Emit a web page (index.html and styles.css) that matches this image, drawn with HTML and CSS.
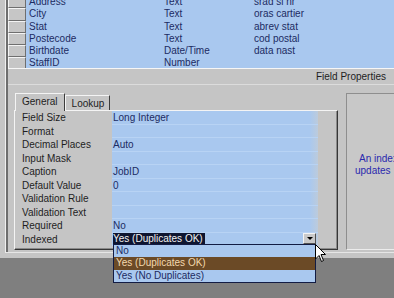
FILE: index.html
```html
<!DOCTYPE html>
<html lang="en">
<head>
    <meta charset="UTF-8">
    <title>Table Design</title>
    <link rel="stylesheet" href="styles.css">
</head>
<body>
    <div class="window">
        <div class="frame">
            <div class="grid">
                <div class="grid-rows">
                    <div class="grow"><span class="sel"></span><span class="c-name">Address</span><span class="c-type">Text</span><span class="c-desc">srad si nr</span></div>
                    <div class="grow"><span class="sel"></span><span class="c-name">City</span><span class="c-type">Text</span><span class="c-desc">oras cartier</span></div>
                    <div class="grow"><span class="sel"></span><span class="c-name">Stat</span><span class="c-type">Text</span><span class="c-desc">abrev stat</span></div>
                    <div class="grow"><span class="sel"></span><span class="c-name">Postecode</span><span class="c-type">Text</span><span class="c-desc">cod postal</span></div>
                    <div class="grow"><span class="sel"></span><span class="c-name">Birthdate</span><span class="c-type">Date/Time</span><span class="c-desc">data nast</span></div>
                    <div class="grow"><span class="sel"></span><span class="c-name">StaffID</span><span class="c-type">Number</span><span class="c-desc"></span></div>
                </div>
            </div>

            <div class="fp-head">Field Properties</div>

            <div class="props">
                <div class="tabs-area">
                    <div class="tabs">
                        <span class="tab active">General</span>
                        <span class="tab">Lookup</span>
                    </div>
                    <div class="panel">
                        <div class="prow"><span class="plabel">Field Size</span><span class="pval">Long Integer</span></div>
                        <div class="prow"><span class="plabel">Format</span><span class="pval"></span></div>
                        <div class="prow"><span class="plabel">Decimal Places</span><span class="pval">Auto</span></div>
                        <div class="prow"><span class="plabel">Input Mask</span><span class="pval"></span></div>
                        <div class="prow"><span class="plabel">Caption</span><span class="pval">JobID</span></div>
                        <div class="prow"><span class="plabel">Default Value</span><span class="pval">0</span></div>
                        <div class="prow"><span class="plabel">Validation Rule</span><span class="pval"></span></div>
                        <div class="prow"><span class="plabel">Validation Text</span><span class="pval"></span></div>
                        <div class="prow"><span class="plabel">Required</span><span class="pval">No</span></div>
                        <div class="prow"><span class="plabel">Indexed</span><span class="pval combo"><span class="combo-sel">Yes (Duplicates OK)</span><span class="combo-btn"></span></span></div>
                    </div>
                </div>
                <div class="help">
                    <p class="help-text">An index speeds up searches<br>updates</p>
                </div>
            </div>
        </div>

        <!-- open dropdown list over the grid -->
        <div class="droplist">
            <div class="ditem">No</div>
            <div class="ditem picked">Yes (Duplicates OK)</div>
            <div class="ditem">Yes (No Duplicates)</div>
        </div>
        <svg class="cursor" width="12" height="19" viewBox="0 0 12 19">
            <path d="M0.5 0.5 L0.5 15 L4 11.5 L6.5 17.5 L8.5 16.5 L6 10.5 L10.5 10.5 Z" fill="#fff" stroke="#000" stroke-width="1"/>
        </svg>
    </div>
</body>
</html>
```

FILE: styles.css
```css
body {
    margin: 0;
    width: 394px;
    height: 298px;
    overflow: hidden;
    background: #7f7f7f;
    font-family: "Liberation Sans", Arial, sans-serif;
    font-size: 10px;
}

.window {
    position: relative;
    height: 258px;
    padding-left: 5px;
    background: #c5c5c5;
    box-sizing: border-box;
}

.frame {
    height: 252px;
    padding-left: 2px;
    border-left: 1px solid #efefef;
    border-bottom: 1px solid #e6e6e6;
    box-shadow: inset 2px 0 #6e6e6e;
}

/* field grid */
.grid {
    height: 68px;
    overflow: hidden;
    border-bottom: 1px solid #f6f6f6;
    background: #a9c8ef;
}

.grid-rows {
    margin-top: -4px;
}

.grow {
    display: flex;
    height: 12.25px;
    line-height: 12.25px;
    color: #1c2b62;
    white-space: nowrap;
}

.sel {
    width: 18px;
    flex: none;
    background: #c6c6c6;
    border-top: 1px solid #f4f4f4;
    border-left: 1px solid #f4f4f4;
    border-right: 1px solid #6f6f6f;
    border-bottom: 1px solid #6f6f6f;
    box-sizing: border-box;
}

.c-name {
    width: 138px;
    padding-left: 3px;
    flex: none;
    box-sizing: border-box;
}

.c-type {
    width: 90px;
    flex: none;
}

.c-desc {
    flex: 1;
}

.fp-head {
    height: 15px;
    line-height: 15px;
    text-align: right;
    padding-right: 8px;
    color: #1e1e1e;
    border-bottom: 1px solid #dcdcdc;
}

/* properties */
.props {
    display: flex;
    align-items: flex-start;
}

.tabs-area {
    margin-left: 6px;
    margin-top: 8px;
    width: 324px;
    flex: none;
}

.tabs {
    display: flex;
    align-items: flex-end;
    padding-left: 1px;
    height: 17px;
}

.tab {
    height: 15px;
    line-height: 15px;
    padding: 0 5px 0 6px;
    color: #1e1e1e;
    border-top: 1px solid #f4f4f4;
    border-left: 1px solid #f4f4f4;
    border-right: 1px solid #3c3c3c;
    box-sizing: border-box;
}

.tab.active {
    height: 18px;
    line-height: 16px;
    margin-bottom: -1px;
    background: #c5c5c5;
    position: relative;
    z-index: 1;
    padding-right: 6px;
}

.panel {
    height: 140px;
    border-top: 1px solid #f4f4f4;
    border-left: 1px solid #f4f4f4;
    border-right: 1px solid #363636;
    border-bottom: 1px solid #363636;
    box-shadow: inset -1px -1px #8a8a8a;
    box-sizing: border-box;
}

.prow {
    display: flex;
    height: 13.5px;
    line-height: 13.5px;
}

.plabel {
    width: 97px;
    padding-left: 7px;
    flex: none;
    color: #1e1e1e;
    box-sizing: border-box;
}

.pval {
    width: 206px;
    flex: none;
    padding-left: 1px;
    color: #1c2b62;
    background: linear-gradient(to right, #a9c8ef 96%, #bccbdc);
    border-bottom: 1px solid #b8d3f4;
    box-sizing: border-box;
}

.combo {
    display: flex;
    align-items: center;
    justify-content: space-between;
}

.combo-sel {
    height: 12px;
    line-height: 12px;
    padding-right: 2px;
    background: #0e1530;
    color: #f2f2f2;
}

.combo-btn {
    width: 13px;
    height: 11px;
    margin-right: 2px;
    background: #c9c9c9;
    border-top: 1px solid #f4f4f4;
    border-left: 1px solid #f4f4f4;
    border-right: 1px solid #505050;
    border-bottom: 1px solid #505050;
    box-sizing: border-box;
    position: relative;
}

.combo-btn::after {
    content: "";
    position: absolute;
    left: 3px;
    top: 3px;
    border-left: 3px solid transparent;
    border-right: 3px solid transparent;
    border-top: 3px solid #000;
}

.help {
    margin-left: 8px;
    margin-top: 8px;
    width: 160px;
    height: 157px;
    flex: none;
    background: #c8c8c8;
    border-top: 1px solid #8e8e8e;
    border-left: 1px solid #8e8e8e;
    border-bottom: 1px solid #ececec;
    box-sizing: border-box;
}

.help-text {
    margin: 0;
    padding: 59px 0 0 8px;
    line-height: 12px;
    text-indent: 4px;
    white-space: nowrap;
    color: #2a28ae;
}

/* open dropdown */
.droplist {
    position: absolute;
    left: 113px;
    top: 244px;
    width: 203px;
    height: 39px;
    background: #a9c8ef;
    border: 1px solid #121c44;
    box-sizing: border-box;
}

.ditem {
    height: 12.4px;
    line-height: 12.4px;
    padding-left: 2px;
    color: #1c2b62;
}

.ditem.picked {
    background: #6b4a26;
    color: #f3d9ae;
}

.cursor {
    position: absolute;
    left: 315px;
    top: 244px;
}
```
